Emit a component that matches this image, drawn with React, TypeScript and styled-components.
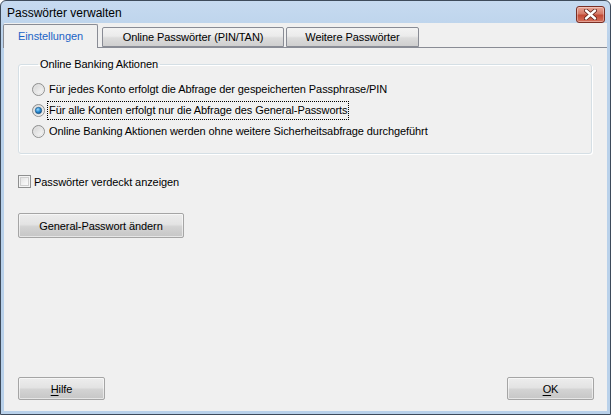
import { FC } from 'react';
import styled, { createGlobalStyle } from 'styled-components';

const GlobalStyle = createGlobalStyle`
  body {
    margin: 0;
    background: #ffffff;
    font-family: 'Liberation Sans', Arial, sans-serif;
    font-size: 11px;
    letter-spacing: -0.08px;
    color: #000000;
  }
`;

const Window = styled.div`
  width: 611px;
  height: 415px;
  box-sizing: border-box;
  border: 1px solid #3e4b5b;
  border-radius: 6px 6px 0 0;
  background: linear-gradient(#c6daf0, #b9d1ea 40px, #b9d1ea);
  padding: 0 3px 3px 3px;
  display: flex;
  flex-direction: column;
  overflow: hidden;
`;

const TitleBar = styled.div`
  height: 22px;
  display: flex;
  align-items: center;
  justify-content: space-between;
  padding: 0 2px 0 3px;
`;

const Title = styled.span`
  font-family: 'Liberation Sans', Arial, sans-serif;
  font-size: 12px;
  letter-spacing: 0;
  color: #000000;
  margin-top: 2px;
`;

const CloseButton = styled.div`
  width: 29px;
  height: 17px;
  box-sizing: border-box;
  margin-top: 4px;
  border: 1px solid #7a2f25;
  border-radius: 3px;
  background: linear-gradient(#e8a596, #d57a68 45%, #c24a36 55%, #d5715c);
  display: flex;
  align-items: center;
  justify-content: center;
  box-shadow: inset 0 0 0 1px rgba(255, 255, 255, 0.35);
`;

const Client = styled.div`
  flex: 1;
  background: #f0f0f0;
  display: flex;
  flex-direction: column;
`;

const TabStrip = styled.div`
  height: 24px;
  display: flex;
  align-items: flex-end;
`;

const Tab = styled.div<{ $active?: boolean; $w: number; $gap: number }>`
  position: relative;
  z-index: ${(p) => (p.$active ? 1 : 0)};
  width: ${(p) => p.$w}px;
  height: ${(p) => (p.$active ? 24 : 20)}px;
  margin-left: ${(p) => p.$gap}px;
  margin-bottom: ${(p) => (p.$active ? -1 : 0)}px;
  box-sizing: border-box;
  border: 1px solid #898c95;
  border-bottom: ${(p) => (p.$active ? 'none' : '1px solid #898c95')};
  border-radius: 2px 2px 0 0;
  background: ${(p) =>
    p.$active ? '#f0f0f0' : 'linear-gradient(#f3f3f3, #ebebeb 45%, #dcdcdc 55%, #cfcfcf)'};
  color: ${(p) => (p.$active ? '#1b63c6' : '#000000')};
  display: flex;
  align-items: center;
  justify-content: center;
  padding-bottom: ${(p) => (p.$active ? 2 : 0)}px;
  white-space: nowrap;
`;

const Panel = styled.div`
  flex: 1;
  border-top: 1px solid #898c95;
  padding: 0 15px 0 14px;
  display: flex;
  flex-direction: column;
  align-items: flex-start;
`;

const GroupBox = styled.fieldset`
  align-self: stretch;
  margin: 10px 0 0 0;
  padding: 8px 0 11px 13px;
  border: 1px solid #d5dfe5;
  border-radius: 3px;
  box-shadow: 1px 1px 0 #ffffff, inset 1px 1px 0 #ffffff;
  display: flex;
  flex-direction: column;
`;

const Legend = styled.legend`
  margin-left: 6px;
  padding: 0 2px;
  line-height: 13px;
`;

const OptionRow = styled.label`
  height: 21px;
  display: flex;
  align-items: center;
  gap: 3px;
`;

const OptionText = styled.span<{ $focused?: boolean }>`
  line-height: 17px;
  padding: 0 1px;
  outline: ${(p) => (p.$focused ? '1px dotted #000000' : 'none')};
  outline-offset: 0;
`;

const CheckRow = styled.label`
  margin-top: 20px;
  height: 15px;
  display: flex;
  align-items: center;
  gap: 3px;
`;

const CheckBox = styled.span`
  width: 13px;
  height: 13px;
  box-sizing: border-box;
  border: 1px solid #8e8f8f;
  background: linear-gradient(135deg, #dcdcdc, #f4f4f4 60%, #ffffff);
  box-shadow: inset 0 0 0 1px #f4f4f4, inset 0 0 0 2px #cfcfcf;
`;

const PushButton = styled.button<{ $w: number; $h: number }>`
  width: ${(p) => p.$w}px;
  height: ${(p) => p.$h}px;
  box-sizing: border-box;
  border: 1px solid #a5a5a5;
  border-radius: 2px;
  background: linear-gradient(#ededed, #e3e3e3 45%, #d3d3d3 55%, #c6c6c6);
  box-shadow: inset 0 0 0 1px rgba(255, 255, 255, 0.55);
  font-family: 'Liberation Sans', Arial, sans-serif;
  font-size: 11px;
  letter-spacing: -0.08px;
  color: #000000;
  padding: 0;
  display: flex;
  align-items: center;
  justify-content: center;
`;

const WideButton = styled(PushButton)`
  margin-top: 24px;
`;

const Footer = styled.div`
  display: flex;
  justify-content: space-between;
  padding: 0 13px 11px 14px;
`;

const Mnemonic = styled.u`
  text-decoration-thickness: 1px;
  text-underline-offset: 2px;
`;

const Radio: FC<{ checked?: boolean }> = ({ checked }) => (
  <svg width="13" height="13" viewBox="0 0 13 13">
    <defs>
      <linearGradient id="rfill" x1="0" y1="0" x2="1" y2="1">
        <stop offset="0" stopColor="#cfcfcf" />
        <stop offset="1" stopColor="#ffffff" />
      </linearGradient>
      <radialGradient id="rdot" cx="0.4" cy="0.35" r="0.7">
        <stop offset="0" stopColor="#9fdcff" />
        <stop offset="0.5" stopColor="#2b8fd6" />
        <stop offset="1" stopColor="#0b4f8a" />
      </radialGradient>
    </defs>
    <circle cx="6.5" cy="6.5" r="6" fill="url(#rfill)" stroke="#8e8f8f" />
    <circle cx="6.5" cy="6.5" r="4.5" fill="none" stroke="#e4e4e4" />
    {checked && <circle cx="6.5" cy="6.5" r="3.2" fill="url(#rdot)" stroke="#1d4f7a" strokeWidth="0.6" />}
  </svg>
);

const CloseGlyph: FC = () => (
  <svg width="13" height="11" viewBox="0 0 13 11">
    <path d="M2 1.5 L11 9.5 M11 1.5 L2 9.5" stroke="#5a1e16" strokeWidth="4" strokeLinecap="round" />
    <path d="M2 1.5 L11 9.5 M11 1.5 L2 9.5" stroke="#ffffff" strokeWidth="2.4" strokeLinecap="round" />
  </svg>
);

const options = [
  'Für jedes Konto erfolgt die Abfrage der gespeicherten Passphrase/PIN',
  'Für alle Konten erfolgt nur die Abfrage des General-Passworts',
  'Online Banking Aktionen werden ohne weitere Sicherheitsabfrage durchgeführt',
];

const App: FC = () => (
  <>
    <GlobalStyle />
    <Window>
      <TitleBar>
        <Title>Passwörter verwalten</Title>
        <CloseButton>
          <CloseGlyph />
        </CloseButton>
      </TitleBar>
      <Client>
        <TabStrip>
          <Tab $active $w={95} $gap={-1}>Einstellungen</Tab>
          <Tab $w={182} $gap={4}>Online Passwörter (PIN/TAN)</Tab>
          <Tab $w={133} $gap={2}>Weitere Passwörter</Tab>
        </TabStrip>
        <Panel>
          <GroupBox>
            <Legend>Online Banking Aktionen</Legend>
            {options.map((text, i) => (
              <OptionRow key={i}>
                <Radio checked={i === 1} />
                <OptionText $focused={i === 1}>{text}</OptionText>
              </OptionRow>
            ))}
          </GroupBox>
          <CheckRow>
            <CheckBox />
            <span>Passwörter verdeckt anzeigen</span>
          </CheckRow>
          <WideButton $w={166} $h={25}>General-Passwort ändern</WideButton>
        </Panel>
        <Footer>
          <PushButton $w={87} $h={23}>
            <Mnemonic>H</Mnemonic>ilfe
          </PushButton>
          <PushButton $w={87} $h={23}>
            <Mnemonic>O</Mnemonic>K
          </PushButton>
        </Footer>
      </Client>
    </Window>
  </>
);

export default App;
